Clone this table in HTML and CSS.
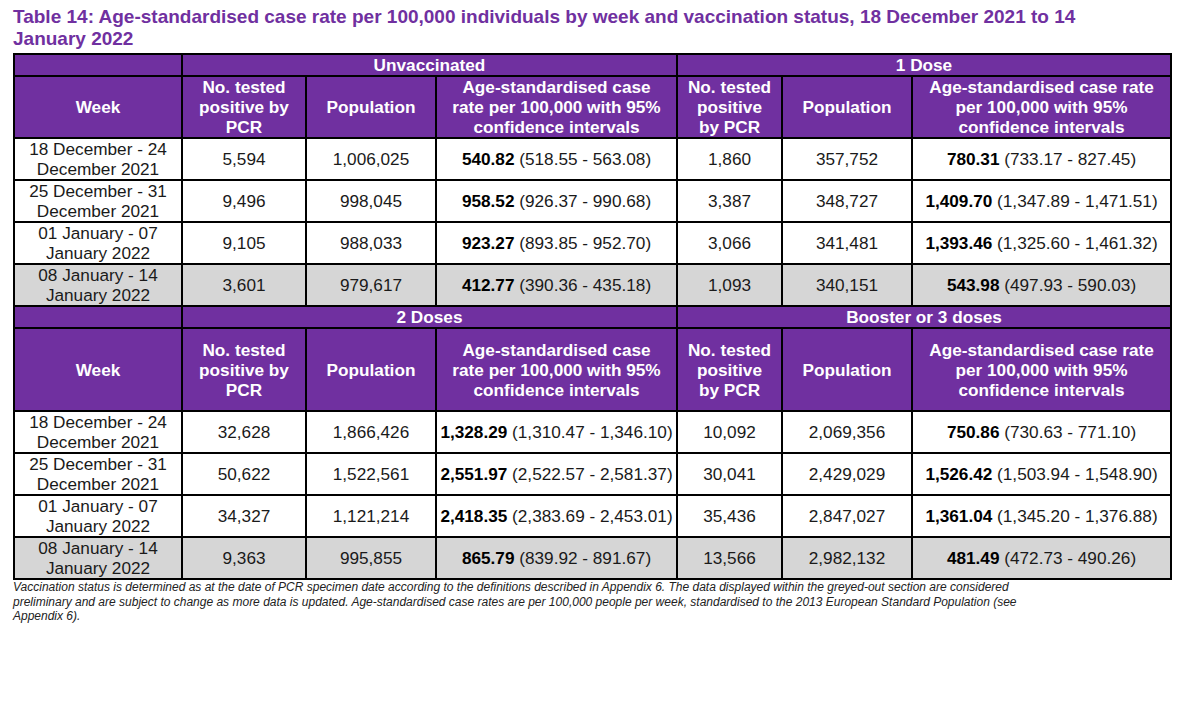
FILE: index.html
```html
<!DOCTYPE html>
<html>
<head>
<meta charset="utf-8">
<link rel="stylesheet" href="styles.css">
</head>
<body>
<div class="page">
  <h1 class="title">Table 14: Age-standardised case rate per 100,000 individuals by week and vaccination status, 18 December 2021 to 14 January 2022</h1>
  <table class="data">
    <colgroup>
      <col class="c-week"><col class="c-pos"><col class="c-pop"><col class="c-rate">
      <col class="c-pos2"><col class="c-pop"><col class="c-rate2">
    </colgroup>
    <tbody>
      <tr class="group">
        <th></th><th colspan="3">Unvaccinated</th><th colspan="3">1 Dose</th>
      </tr>
      <tr class="head head1">
        <th>Week</th>
        <th>No. tested<br>positive by<br>PCR</th>
        <th>Population</th>
        <th>Age-standardised case<br>rate per 100,000 with 95%<br>confidence intervals</th>
        <th>No. tested<br>positive<br>by PCR</th>
        <th>Population</th>
        <th>Age-standardised case rate<br>per 100,000 with 95%<br>confidence intervals</th>
      </tr>
      <tr class="row">
        <td>18 December - 24<br>December 2021</td><td>5,594</td><td>1,006,025</td><td><b>540.82</b> (518.55 - 563.08)</td><td>1,860</td><td>357,752</td><td><b>780.31</b> (733.17 - 827.45)</td>
      </tr>
      <tr class="row">
        <td>25 December - 31<br>December 2021</td><td>9,496</td><td>998,045</td><td><b>958.52</b> (926.37 - 990.68)</td><td>3,387</td><td>348,727</td><td><b>1,409.70</b> (1,347.89 - 1,471.51)</td>
      </tr>
      <tr class="row">
        <td>01 January - 07<br>January 2022</td><td>9,105</td><td>988,033</td><td><b>923.27</b> (893.85 - 952.70)</td><td>3,066</td><td>341,481</td><td><b>1,393.46</b> (1,325.60 - 1,461.32)</td>
      </tr>
      <tr class="row grey">
        <td>08 January - 14<br>January 2022</td><td>3,601</td><td>979,617</td><td><b>412.77</b> (390.36 - 435.18)</td><td>1,093</td><td>340,151</td><td><b>543.98</b> (497.93 - 590.03)</td>
      </tr>
      <tr class="group">
        <th></th><th colspan="3">2 Doses</th><th colspan="3">Booster or 3 doses</th>
      </tr>
      <tr class="head head2">
        <th>Week</th>
        <th>No. tested<br>positive by<br>PCR</th>
        <th>Population</th>
        <th>Age-standardised case<br>rate per 100,000 with 95%<br>confidence intervals</th>
        <th>No. tested<br>positive<br>by PCR</th>
        <th>Population</th>
        <th>Age-standardised case rate<br>per 100,000 with 95%<br>confidence intervals</th>
      </tr>
      <tr class="row">
        <td>18 December - 24<br>December 2021</td><td>32,628</td><td>1,866,426</td><td><b>1,328.29</b> (1,310.47 - 1,346.10)</td><td>10,092</td><td>2,069,356</td><td><b>750.86</b> (730.63 - 771.10)</td>
      </tr>
      <tr class="row">
        <td>25 December - 31<br>December 2021</td><td>50,622</td><td>1,522,561</td><td><b>2,551.97</b> (2,522.57 - 2,581.37)</td><td>30,041</td><td>2,429,029</td><td><b>1,526.42</b> (1,503.94 - 1,548.90)</td>
      </tr>
      <tr class="row">
        <td>01 January - 07<br>January 2022</td><td>34,327</td><td>1,121,214</td><td><b>2,418.35</b> (2,383.69 - 2,453.01)</td><td>35,436</td><td>2,847,027</td><td><b>1,361.04</b> (1,345.20 - 1,376.88)</td>
      </tr>
      <tr class="row grey">
        <td>08 January - 14<br>January 2022</td><td>9,363</td><td>995,855</td><td><b>865.79</b> (839.92 - 891.67)</td><td>13,566</td><td>2,982,132</td><td><b>481.49</b> (472.73 - 490.26)</td>
      </tr>
    </tbody>
  </table>
  <p class="note">Vaccination status is determined as at the date of PCR specimen date according to the definitions described in Appendix 6. The data displayed within the greyed-out section are considered preliminary and are subject to change as more data is updated. Age-standardised case rates are per 100,000 people per week, standardised to the 2013 European Standard Population (see Appendix 6).</p>
</div>
</body>
</html>
```

FILE: styles.css
```css
html, body {
  margin: 0;
  padding: 0;
  background: #ffffff;
}
.page {
  padding: 0 0 0 13px;
  font-family: "Liberation Sans", Arial, sans-serif;
  color: #111;
}
.title {
  margin: 0;
  padding-top: 6px;
  width: 1090px;
  font-size: 19px;
  line-height: 22px;
  font-weight: bold;
  color: #7030a0;
  height: 53px;
  box-sizing: border-box;
}
.data {
  border-collapse: collapse;
  table-layout: fixed;
  width: 1159px;
  font-size: 17.2px;
  line-height: 20px;
}
.c-week { width: 168px; }
.c-pos { width: 124px; }
.c-pop { width: 130px; }
.c-rate { width: 241px; }
.c-pos2 { width: 105px; }
.c-rate2 { width: 259px; }
.data th, .data td {
  border: 2px solid #000;
  padding: 0 1px;
  text-align: center;
  vertical-align: middle;
  white-space: nowrap;
}
.data th {
  background: #7030a0;
  color: #fff;
  font-weight: bold;
}
.group th { height: 19px; line-height: 19px; padding: 1px 0 0; }
.head1 th { height: 59px; }
.head2 th { height: 81px; }
.row td { height: 40px; color: #1a1a1a; }
.row td b { color: #000; }
.grey td { background: #d6d6d6; }
.note {
  margin: 0;
  width: 1028px;
  font-size: 12px;
  line-height: 14.5px;
  font-style: italic;
  color: #222;
}
```
